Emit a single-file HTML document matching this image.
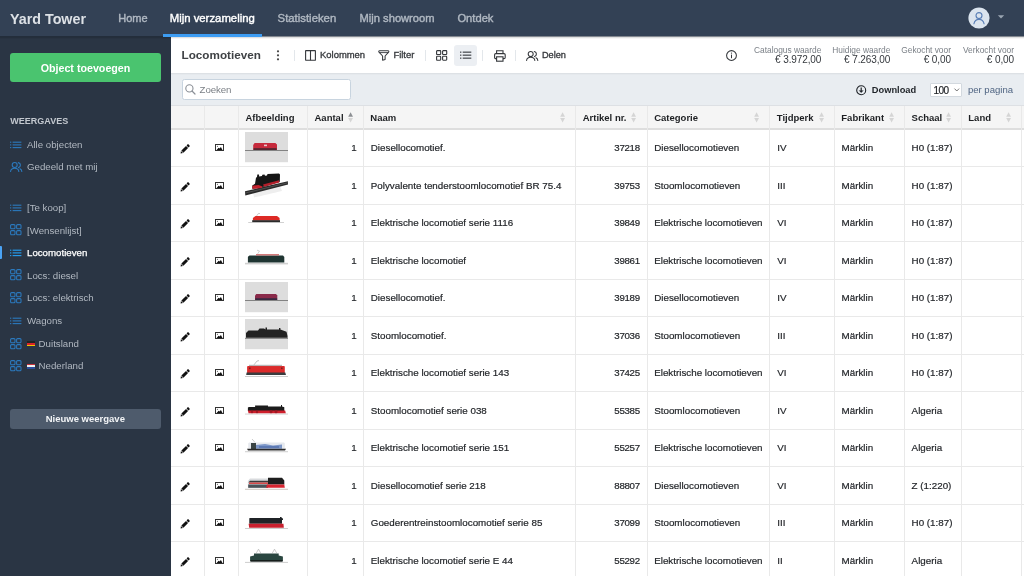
<!DOCTYPE html>
<html><head><meta charset="utf-8">
<style>
*{box-sizing:border-box;margin:0;padding:0}
html,body{width:1024px;height:576px;overflow:hidden;background:#fff;font-family:"Liberation Sans",sans-serif}
.a{position:absolute;overflow:visible}
.t{position:absolute;line-height:20px;white-space:nowrap}
#wrap{position:absolute;left:0;top:0;width:1024px;height:576px;will-change:transform}
</style></head><body><div id="wrap">
<div class="a" style="left:0.00px;top:0.00px;width:1024.00px;height:36.00px;background:#334155;z-index:3"></div>
<div class="a" style="left:0.00px;top:36.00px;width:1024.00px;height:1.00px;background:rgba(30,38,52,.55);z-index:3"></div>
<div class="a" style="left:0.00px;top:37.00px;width:1024.00px;height:1.00px;background:rgba(0,0,0,.12);z-index:3"></div>
<div class="a" style="left:0.00px;top:38.00px;width:1024.00px;height:1.00px;background:rgba(0,0,0,.04);z-index:3"></div>
<div class="t" style="left:10.00px;top:8.95px;font-size:14.3px;color:#dde1e6;font-weight:bold;z-index:4">Yard Tower</div>
<div class="t" style="left:118.20px;top:8.49px;font-size:11.0px;color:#b0b8c2;font-weight:normal;z-index:4;-webkit-text-stroke:0.4px #b0b8c2">Home</div>
<div class="t" style="left:169.70px;top:8.37px;font-size:11.35px;color:#ffffff;font-weight:normal;z-index:4;-webkit-text-stroke:0.4px #ffffff">Mijn verzameling</div>
<div class="t" style="left:277.60px;top:8.37px;font-size:11.35px;color:#b0b8c2;font-weight:normal;z-index:4;-webkit-text-stroke:0.4px #b0b8c2">Statistieken</div>
<div class="t" style="left:359.60px;top:8.44px;font-size:11.15px;color:#b0b8c2;font-weight:normal;z-index:4;-webkit-text-stroke:0.4px #b0b8c2">Mijn showroom</div>
<div class="t" style="left:457.40px;top:8.42px;font-size:11.2px;color:#b0b8c2;font-weight:normal;z-index:4;-webkit-text-stroke:0.4px #b0b8c2">Ontdek</div>
<div class="a" style="left:163.00px;top:34.00px;width:99.00px;height:3.00px;background:#3d9cf2;z-index:4"></div>
<svg class="a" style="left:967.60px;top:7.20px;z-index:4" width="22" height="22" viewBox="0 0 22 22"><circle cx="11" cy="11" r="10.6" fill="#dbe4ee"/><circle cx="11" cy="8.6" r="3" fill="none" stroke="#5a7fb6" stroke-width="1.1"/><path d="M5.9 16.8 C6.6 13.6 8.6 12.4 11 12.4 C13.4 12.4 15.4 13.6 16.1 16.8" fill="none" stroke="#5a7fb6" stroke-width="1.1" stroke-linecap="round"/></svg>
<svg class="a" style="left:996.60px;top:14.20px;z-index:4" width="8" height="6" viewBox="0 0 8 6"><path d="M0.8 1.2 L7.2 1.2 L4 4.6 Z" fill="#9aa5b2"/></svg>
<div class="a" style="left:0.00px;top:36.00px;width:171.00px;height:540.00px;background:#2a3544"></div>
<div class="a" style="left:10.00px;top:53.00px;width:150.70px;height:29.00px;background:#4ac46f;border-radius:3px"></div>
<div class="t" style="left:-64.50px;width:300px;text-align:center;top:57.89px;font-size:10.7px;color:#ffffff;font-weight:bold;">Object toevoegen</div>
<div class="t" style="left:10.30px;top:111.18px;font-size:9.0px;color:#c3c8cf;font-weight:bold;">WEERGAVES</div>
<svg class="a" style="left:10.30px;top:141.00px;" width="12" height="8" viewBox="0 0 12 8"><rect x="0" y="0.6499999999999999" width="1.3" height="1.1" fill="#2b79bd"/><rect x="2.6" y="0.6499999999999999" width="8.8" height="1.1" fill="#2b79bd"/><rect x="0" y="3.3499999999999996" width="1.3" height="1.1" fill="#2b79bd"/><rect x="2.6" y="3.3499999999999996" width="8.8" height="1.1" fill="#2b79bd"/><rect x="0" y="6.05" width="1.3" height="1.1" fill="#2b79bd"/><rect x="2.6" y="6.05" width="8.8" height="1.1" fill="#2b79bd"/></svg>
<div class="t" style="left:27.00px;top:134.74px;font-size:9.7px;color:#b1b8c1;font-weight:normal;">Alle objecten</div>
<svg class="a" style="left:10.10px;top:162.40px;" width="12.3" height="10" viewBox="0 0 12.3 10"><circle cx="4.7" cy="3.0" r="2.5" fill="none" stroke="#2b79bd" stroke-width="1.1"/><path d="M0.6 9.5 C0.8 7.3 2.6 6.3 4.7 6.3 C6.8 6.3 8.6 7.3 8.8 9.5" fill="none" stroke="#2b79bd" stroke-width="1.1" stroke-linecap="round"/><path d="M8.3 0.6 C9.6 0.9 10.4 1.9 10.4 3.1 C10.4 4.3 9.6 5.3 8.5 5.6" fill="none" stroke="#2b79bd" stroke-width="1.1" stroke-linecap="round"/><path d="M10 6.7 C11.2 7.3 11.8 8.3 11.8 9.5" fill="none" stroke="#2b79bd" stroke-width="1.1" stroke-linecap="round"/></svg>
<div class="t" style="left:27.00px;top:157.34px;font-size:9.7px;color:#b1b8c1;font-weight:normal;">Gedeeld met mij</div>
<svg class="a" style="left:10.30px;top:203.90px;" width="12" height="8" viewBox="0 0 12 8"><rect x="0" y="0.6499999999999999" width="1.3" height="1.1" fill="#2b79bd"/><rect x="2.6" y="0.6499999999999999" width="8.8" height="1.1" fill="#2b79bd"/><rect x="0" y="3.3499999999999996" width="1.3" height="1.1" fill="#2b79bd"/><rect x="2.6" y="3.3499999999999996" width="8.8" height="1.1" fill="#2b79bd"/><rect x="0" y="6.05" width="1.3" height="1.1" fill="#2b79bd"/><rect x="2.6" y="6.05" width="8.8" height="1.1" fill="#2b79bd"/></svg>
<div class="t" style="left:27.00px;top:197.64px;font-size:9.7px;color:#b1b8c1;font-weight:normal;">[Te koop]</div>
<svg class="a" style="left:10.20px;top:224.10px;" width="12" height="12" viewBox="0 0 12 12"><rect x="0.6" y="0.6" width="4.4" height="4.2" rx="1" fill="none" stroke="#2b79bd" stroke-width="1.05"/><rect x="0.6" y="6.6" width="4.4" height="4.2" rx="1" fill="none" stroke="#2b79bd" stroke-width="1.05"/><rect x="6.6" y="0.6" width="4.4" height="4.2" rx="1" fill="none" stroke="#2b79bd" stroke-width="1.05"/><rect x="6.6" y="6.6" width="4.4" height="4.2" rx="1" fill="none" stroke="#2b79bd" stroke-width="1.05"/></svg>
<div class="t" style="left:27.00px;top:220.64px;font-size:9.7px;color:#b1b8c1;font-weight:normal;">[Wensenlijst]</div>
<div class="a" style="left:0.00px;top:246.00px;width:2.00px;height:13.00px;background:#4aa3f5;border-radius:0 1px 1px 0"></div>
<svg class="a" style="left:10.30px;top:248.90px;" width="12" height="8" viewBox="0 0 12 8"><rect x="0" y="0.6499999999999999" width="1.3" height="1.1" fill="#24a0f4"/><rect x="2.6" y="0.6499999999999999" width="8.8" height="1.1" fill="#24a0f4"/><rect x="0" y="3.3499999999999996" width="1.3" height="1.1" fill="#24a0f4"/><rect x="2.6" y="3.3499999999999996" width="8.8" height="1.1" fill="#24a0f4"/><rect x="0" y="6.05" width="1.3" height="1.1" fill="#24a0f4"/><rect x="2.6" y="6.05" width="8.8" height="1.1" fill="#24a0f4"/></svg>
<div class="t" style="left:27.00px;top:242.64px;font-size:9.7px;color:#ffffff;font-weight:normal;-webkit-text-stroke:0.25px #fff">Locomotieven</div>
<svg class="a" style="left:10.20px;top:269.10px;" width="12" height="12" viewBox="0 0 12 12"><rect x="0.6" y="0.6" width="4.4" height="4.2" rx="1" fill="none" stroke="#2b79bd" stroke-width="1.05"/><rect x="0.6" y="6.6" width="4.4" height="4.2" rx="1" fill="none" stroke="#2b79bd" stroke-width="1.05"/><rect x="6.6" y="0.6" width="4.4" height="4.2" rx="1" fill="none" stroke="#2b79bd" stroke-width="1.05"/><rect x="6.6" y="6.6" width="4.4" height="4.2" rx="1" fill="none" stroke="#2b79bd" stroke-width="1.05"/></svg>
<div class="t" style="left:27.00px;top:265.64px;font-size:9.7px;color:#b1b8c1;font-weight:normal;">Locs: diesel</div>
<svg class="a" style="left:10.20px;top:291.80px;" width="12" height="12" viewBox="0 0 12 12"><rect x="0.6" y="0.6" width="4.4" height="4.2" rx="1" fill="none" stroke="#2b79bd" stroke-width="1.05"/><rect x="0.6" y="6.6" width="4.4" height="4.2" rx="1" fill="none" stroke="#2b79bd" stroke-width="1.05"/><rect x="6.6" y="0.6" width="4.4" height="4.2" rx="1" fill="none" stroke="#2b79bd" stroke-width="1.05"/><rect x="6.6" y="6.6" width="4.4" height="4.2" rx="1" fill="none" stroke="#2b79bd" stroke-width="1.05"/></svg>
<div class="t" style="left:27.00px;top:288.34px;font-size:9.7px;color:#b1b8c1;font-weight:normal;">Locs: elektrisch</div>
<svg class="a" style="left:10.30px;top:317.10px;" width="12" height="8" viewBox="0 0 12 8"><rect x="0" y="0.6499999999999999" width="1.3" height="1.1" fill="#2b79bd"/><rect x="2.6" y="0.6499999999999999" width="8.8" height="1.1" fill="#2b79bd"/><rect x="0" y="3.3499999999999996" width="1.3" height="1.1" fill="#2b79bd"/><rect x="2.6" y="3.3499999999999996" width="8.8" height="1.1" fill="#2b79bd"/><rect x="0" y="6.05" width="1.3" height="1.1" fill="#2b79bd"/><rect x="2.6" y="6.05" width="8.8" height="1.1" fill="#2b79bd"/></svg>
<div class="t" style="left:27.00px;top:310.84px;font-size:9.7px;color:#b1b8c1;font-weight:normal;">Wagons</div>
<svg class="a" style="left:10.20px;top:337.50px;" width="12" height="12" viewBox="0 0 12 12"><rect x="0.6" y="0.6" width="4.4" height="4.2" rx="1" fill="none" stroke="#2b79bd" stroke-width="1.05"/><rect x="0.6" y="6.6" width="4.4" height="4.2" rx="1" fill="none" stroke="#2b79bd" stroke-width="1.05"/><rect x="6.6" y="0.6" width="4.4" height="4.2" rx="1" fill="none" stroke="#2b79bd" stroke-width="1.05"/><rect x="6.6" y="6.6" width="4.4" height="4.2" rx="1" fill="none" stroke="#2b79bd" stroke-width="1.05"/></svg>
<div class="a" style="left:27.00px;top:341.30px;width:8.40px;height:1.70px;background:#222"></div>
<div class="a" style="left:27.00px;top:343.00px;width:8.40px;height:1.70px;background:#d8232a"></div>
<div class="a" style="left:27.00px;top:344.70px;width:8.40px;height:1.70px;background:#f2c200"></div>
<div class="t" style="left:38.60px;top:334.04px;font-size:9.7px;color:#b1b8c1;font-weight:normal;">Duitsland</div>
<svg class="a" style="left:10.20px;top:359.70px;" width="12" height="12" viewBox="0 0 12 12"><rect x="0.6" y="0.6" width="4.4" height="4.2" rx="1" fill="none" stroke="#2b79bd" stroke-width="1.05"/><rect x="0.6" y="6.6" width="4.4" height="4.2" rx="1" fill="none" stroke="#2b79bd" stroke-width="1.05"/><rect x="6.6" y="0.6" width="4.4" height="4.2" rx="1" fill="none" stroke="#2b79bd" stroke-width="1.05"/><rect x="6.6" y="6.6" width="4.4" height="4.2" rx="1" fill="none" stroke="#2b79bd" stroke-width="1.05"/></svg>
<div class="a" style="left:27.00px;top:363.50px;width:8.40px;height:1.70px;background:#c8303a"></div>
<div class="a" style="left:27.00px;top:365.20px;width:8.40px;height:1.70px;background:#eeeeee"></div>
<div class="a" style="left:27.00px;top:366.90px;width:8.40px;height:1.70px;background:#2a4d9a"></div>
<div class="t" style="left:38.60px;top:356.24px;font-size:9.7px;color:#b1b8c1;font-weight:normal;">Nederland</div>
<div class="a" style="left:10.00px;top:409.00px;width:150.70px;height:20.00px;background:#4e5b6c;border-radius:3px"></div>
<div class="t" style="left:-64.70px;width:300px;text-align:center;top:409.41px;font-size:9.5px;color:#f2f4f6;font-weight:bold;">Nieuwe weergave</div>
<div class="a" style="left:171.00px;top:36.00px;width:853.00px;height:37.00px;background:#ffffff"></div>
<div class="t" style="left:181.60px;top:45.45px;font-size:11.7px;color:#3f4245;font-weight:bold;">Locomotieven</div>
<svg class="a" style="left:276.00px;top:50.00px;" width="4" height="11" viewBox="0 0 4 11"><circle cx="2" cy="1.3" r="1.1" fill="#444"/><circle cx="2" cy="5.3" r="1.1" fill="#444"/><circle cx="2" cy="9.3" r="1.1" fill="#444"/></svg>
<div class="a" style="left:293.50px;top:49.50px;width:1.00px;height:11.50px;background:#e3e7eb"></div>
<div class="a" style="left:424.90px;top:49.50px;width:1.00px;height:11.50px;background:#e3e7eb"></div>
<div class="a" style="left:482.00px;top:49.50px;width:1.00px;height:11.50px;background:#e3e7eb"></div>
<div class="a" style="left:515.30px;top:49.50px;width:1.00px;height:11.50px;background:#e3e7eb"></div>
<svg class="a" style="left:305.00px;top:50.00px;" width="11" height="11" viewBox="0 0 11 11"><rect x="0.6" y="0.6" width="9.8" height="9.6" rx="0.3" fill="none" stroke="#34373b" stroke-width="1.1"/><line x1="5.5" y1="0.6" x2="5.5" y2="10.2" stroke="#34373b" stroke-width="1.1"/></svg>
<div class="t" style="left:320.00px;top:45.13px;font-size:9.45px;color:#34373b;font-weight:normal;-webkit-text-stroke:0.3px #34373b">Kolommen</div>
<svg class="a" style="left:378.00px;top:49.80px;" width="12" height="11" viewBox="0 0 12 11"><path d="M1.6 0.7 H10 C10.8 0.7 11.1 1.6 10.6 2.2 L7.1 6 V9.6 L4.6 10.2 V6 L1 2.2 C0.5 1.6 0.8 0.7 1.6 0.7 Z" fill="none" stroke="#34373b" stroke-width="1.05" stroke-linejoin="round"/><line x1="1.4" y1="2.6" x2="10.2" y2="2.6" stroke="#34373b" stroke-width="0.9"/></svg>
<div class="t" style="left:393.40px;top:45.13px;font-size:9.45px;color:#34373b;font-weight:normal;-webkit-text-stroke:0.3px #34373b">Filter</div>
<svg class="a" style="left:436.40px;top:50.00px;" width="12" height="11" viewBox="0 0 12 11"><rect x="0.6" y="0.6" width="4.1" height="3.9" rx="0.6" fill="none" stroke="#34373b" stroke-width="1.1"/><rect x="0.6" y="6.3" width="4.1" height="3.9" rx="0.6" fill="none" stroke="#34373b" stroke-width="1.1"/><rect x="6.6" y="0.6" width="4.1" height="3.9" rx="0.6" fill="none" stroke="#34373b" stroke-width="1.1"/><rect x="6.6" y="6.3" width="4.1" height="3.9" rx="0.6" fill="none" stroke="#34373b" stroke-width="1.1"/></svg>
<div class="a" style="left:454.40px;top:44.70px;width:23.10px;height:21.10px;background:#eceff3;border-radius:3px"></div>
<svg class="a" style="left:460.00px;top:51.00px;" width="12" height="9" viewBox="0 0 12 9"><rect x="0" y="0.6" width="1.4" height="1.1" fill="#34373b"/><rect x="2.7" y="0.6" width="8.6" height="1.1" fill="#34373b"/><rect x="0" y="3.6" width="1.4" height="1.1" fill="#34373b"/><rect x="2.7" y="3.6" width="8.6" height="1.1" fill="#34373b"/><rect x="0" y="6.6" width="1.4" height="1.1" fill="#34373b"/><rect x="2.7" y="6.6" width="8.6" height="1.1" fill="#34373b"/></svg>
<svg class="a" style="left:493.80px;top:49.60px;" width="12" height="12" viewBox="0 0 12 12"><path d="M2.6 3.6 V0.8 H9 V3.6" fill="none" stroke="#34373b" stroke-width="1.1"/><rect x="0.6" y="3.6" width="10.6" height="5" rx="1.2" fill="none" stroke="#34373b" stroke-width="1.1"/><rect x="2.6" y="6.8" width="6.4" height="4.4" fill="#fff" stroke="#34373b" stroke-width="1.1"/></svg>
<svg class="a" style="left:526.00px;top:50.60px;" width="12.3" height="10" viewBox="0 0 12.3 10"><circle cx="4.7" cy="3.0" r="2.5" fill="none" stroke="#34373b" stroke-width="1.05"/><path d="M0.6 9.5 C0.8 7.3 2.6 6.3 4.7 6.3 C6.8 6.3 8.6 7.3 8.8 9.5" fill="none" stroke="#34373b" stroke-width="1.05" stroke-linecap="round"/><path d="M8.3 0.6 C9.6 0.9 10.4 1.9 10.4 3.1 C10.4 4.3 9.6 5.3 8.5 5.6" fill="none" stroke="#34373b" stroke-width="1.05" stroke-linecap="round"/><path d="M10 6.7 C11.2 7.3 11.8 8.3 11.8 9.5" fill="none" stroke="#34373b" stroke-width="1.05" stroke-linecap="round"/></svg>
<div class="t" style="left:541.90px;top:45.21px;font-size:9.2px;color:#34373b;font-weight:normal;-webkit-text-stroke:0.3px #34373b">Delen</div>
<svg class="a" style="left:726.00px;top:49.60px;" width="11" height="11" viewBox="0 0 11 11"><circle cx="5.5" cy="5.5" r="4.9" fill="none" stroke="#34373b" stroke-width="1.05"/><rect x="5" y="4.6" width="1" height="3.6" fill="#34373b"/><circle cx="5.5" cy="3.1" r="0.65" fill="#34373b"/></svg>
<div class="t" style="right:202.70px;top:39.81px;font-size:8.35px;color:#7b8087;font-weight:normal;">Catalogus waarde</div>
<div class="t" style="right:202.70px;top:49.94px;font-size:10.0px;color:#34383d;font-weight:normal;letter-spacing:-0.1px">€ 3.972,00</div>
<div class="t" style="right:133.70px;top:39.81px;font-size:8.35px;color:#7b8087;font-weight:normal;">Huidige waarde</div>
<div class="t" style="right:133.70px;top:49.94px;font-size:10.0px;color:#34383d;font-weight:normal;letter-spacing:-0.1px">€ 7.263,00</div>
<div class="t" style="right:73.10px;top:39.81px;font-size:8.35px;color:#7b8087;font-weight:normal;">Gekocht voor</div>
<div class="t" style="right:73.10px;top:49.94px;font-size:10.0px;color:#34383d;font-weight:normal;letter-spacing:-0.1px">€ 0,00</div>
<div class="t" style="right:10.00px;top:39.81px;font-size:8.35px;color:#7b8087;font-weight:normal;">Verkocht voor</div>
<div class="t" style="right:10.00px;top:49.94px;font-size:10.0px;color:#34383d;font-weight:normal;letter-spacing:-0.1px">€ 0,00</div>
<div class="a" style="left:171.00px;top:73.00px;width:853.00px;height:32.50px;background:#e9edf1"></div>
<div class="a" style="left:171.00px;top:73.00px;width:853.00px;height:2.00px;background:linear-gradient(#d9dde1,#e9edf1)"></div>
<div class="a" style="left:182.00px;top:79.20px;width:168.60px;height:20.80px;background:#fff;border:1px solid #c8d4df;border-radius:2.5px"></div>
<svg class="a" style="left:185.30px;top:83.80px;" width="11" height="11" viewBox="0 0 11 11"><circle cx="4.4" cy="4.4" r="3.6" fill="none" stroke="#8a8f96" stroke-width="1.1"/><line x1="7" y1="7" x2="10" y2="10" stroke="#8a8f96" stroke-width="1.2" stroke-linecap="round"/></svg>
<div class="t" style="left:199.60px;top:79.84px;font-size:9.7px;color:#7a7f85;font-weight:normal;letter-spacing:-0.1px">Zoeken</div>
<svg class="a" style="left:855.80px;top:84.70px;" width="11" height="11" viewBox="0 0 11 11"><circle cx="5.2" cy="5.2" r="4.5" fill="none" stroke="#1f2328" stroke-width="1.1"/><line x1="5.2" y1="2.6" x2="5.2" y2="7" stroke="#1f2328" stroke-width="1.2"/><path d="M3.2 5.4 L5.2 7.6 L7.2 5.4" fill="#1f2328" stroke="#1f2328" stroke-width="0.6"/></svg>
<div class="t" style="left:871.80px;top:79.78px;font-size:9.3px;color:#1f2328;font-weight:bold;">Download</div>
<div class="a" style="left:930.10px;top:83.20px;width:31.50px;height:14.00px;background:#fff;border:1px solid #d3d9df;border-radius:1px"></div>
<div class="t" style="left:933.40px;top:80.83px;font-size:10.0px;color:#222529;font-weight:normal;letter-spacing:-0.5px;-webkit-text-stroke:0.2px #222529">100</div>
<svg class="a" style="left:953.60px;top:88.00px;" width="6" height="4" viewBox="0 0 6 4"><path d="M0.5 0.6 L2.8 3 L5.1 0.6" fill="none" stroke="#555" stroke-width="0.8"/></svg>
<div class="t" style="left:967.90px;top:80.19px;font-size:9.55px;color:#4f6482;font-weight:normal;">per pagina</div>
<div class="a" style="left:171.00px;top:105.50px;width:853.00px;height:23.70px;background:#f5f5f5"></div>
<div class="a" style="left:171.00px;top:128.00px;width:853.00px;height:1.70px;background:#dedede"></div>
<div class="a" style="left:171.00px;top:105.00px;width:853.00px;height:1.00px;background:#dde0e4"></div>
<div class="a" style="left:203.90px;top:105.50px;width:1.00px;height:470.50px;background:#e9e9e9"></div>
<div class="a" style="left:237.90px;top:105.50px;width:1.00px;height:470.50px;background:#e9e9e9"></div>
<div class="a" style="left:307.00px;top:105.50px;width:1.00px;height:470.50px;background:#e9e9e9"></div>
<div class="a" style="left:362.80px;top:105.50px;width:1.00px;height:470.50px;background:#e9e9e9"></div>
<div class="a" style="left:575.20px;top:105.50px;width:1.00px;height:470.50px;background:#e9e9e9"></div>
<div class="a" style="left:646.70px;top:105.50px;width:1.00px;height:470.50px;background:#e9e9e9"></div>
<div class="a" style="left:769.30px;top:105.50px;width:1.00px;height:470.50px;background:#e9e9e9"></div>
<div class="a" style="left:833.80px;top:105.50px;width:1.00px;height:470.50px;background:#e9e9e9"></div>
<div class="a" style="left:904.10px;top:105.50px;width:1.00px;height:470.50px;background:#e9e9e9"></div>
<div class="a" style="left:960.80px;top:105.50px;width:1.00px;height:470.50px;background:#e9e9e9"></div>
<div class="a" style="left:1020.80px;top:105.50px;width:1.00px;height:470.50px;background:#e9e9e9"></div>
<div class="a" style="left:171.00px;top:166.20px;width:853.00px;height:1.00px;background:#e9e9e9"></div>
<div class="a" style="left:171.00px;top:203.70px;width:853.00px;height:1.00px;background:#e9e9e9"></div>
<div class="a" style="left:171.00px;top:241.20px;width:853.00px;height:1.00px;background:#e9e9e9"></div>
<div class="a" style="left:171.00px;top:278.70px;width:853.00px;height:1.00px;background:#e9e9e9"></div>
<div class="a" style="left:171.00px;top:316.20px;width:853.00px;height:1.00px;background:#e9e9e9"></div>
<div class="a" style="left:171.00px;top:353.70px;width:853.00px;height:1.00px;background:#e9e9e9"></div>
<div class="a" style="left:171.00px;top:391.20px;width:853.00px;height:1.00px;background:#e9e9e9"></div>
<div class="a" style="left:171.00px;top:428.70px;width:853.00px;height:1.00px;background:#e9e9e9"></div>
<div class="a" style="left:171.00px;top:466.20px;width:853.00px;height:1.00px;background:#e9e9e9"></div>
<div class="a" style="left:171.00px;top:503.70px;width:853.00px;height:1.00px;background:#e9e9e9"></div>
<div class="a" style="left:171.00px;top:541.20px;width:853.00px;height:1.00px;background:#e9e9e9"></div>
<div class="a" style="left:171.00px;top:578.70px;width:853.00px;height:1.00px;background:#e9e9e9"></div>
<div class="t" style="left:245.40px;top:107.91px;font-size:9.5px;color:#1d1f22;font-weight:bold;">Afbeelding</div>
<div class="t" style="left:314.50px;top:107.91px;font-size:9.5px;color:#1d1f22;font-weight:bold;">Aantal</div>
<svg class="a" style="left:347.50px;top:111.70px;" width="5.2" height="11" viewBox="0 0 5.2 11"><path d="M0.2 4.8 L2.6 0.3 L5 4.8 Z" fill="#8c8f93"/><path d="M0.2 6.1 L2.6 10.6 L5 6.1 Z" fill="#d5d5d5"/></svg>
<div class="t" style="left:370.30px;top:107.91px;font-size:9.5px;color:#1d1f22;font-weight:bold;">Naam</div>
<svg class="a" style="left:559.90px;top:111.70px;" width="5.2" height="11" viewBox="0 0 5.2 11"><path d="M0.2 4.8 L2.6 0.3 L5 4.8 Z" fill="#d5d5d5"/><path d="M0.2 6.1 L2.6 10.6 L5 6.1 Z" fill="#d5d5d5"/></svg>
<div class="t" style="left:582.70px;top:107.91px;font-size:9.5px;color:#1d1f22;font-weight:bold;">Artikel nr.</div>
<svg class="a" style="left:631.40px;top:111.70px;" width="5.2" height="11" viewBox="0 0 5.2 11"><path d="M0.2 4.8 L2.6 0.3 L5 4.8 Z" fill="#d5d5d5"/><path d="M0.2 6.1 L2.6 10.6 L5 6.1 Z" fill="#d5d5d5"/></svg>
<div class="t" style="left:654.20px;top:107.91px;font-size:9.5px;color:#1d1f22;font-weight:bold;">Categorie</div>
<svg class="a" style="left:754.00px;top:111.70px;" width="5.2" height="11" viewBox="0 0 5.2 11"><path d="M0.2 4.8 L2.6 0.3 L5 4.8 Z" fill="#d5d5d5"/><path d="M0.2 6.1 L2.6 10.6 L5 6.1 Z" fill="#d5d5d5"/></svg>
<div class="t" style="left:776.80px;top:107.91px;font-size:9.5px;color:#1d1f22;font-weight:bold;">Tijdperk</div>
<svg class="a" style="left:818.50px;top:111.70px;" width="5.2" height="11" viewBox="0 0 5.2 11"><path d="M0.2 4.8 L2.6 0.3 L5 4.8 Z" fill="#d5d5d5"/><path d="M0.2 6.1 L2.6 10.6 L5 6.1 Z" fill="#d5d5d5"/></svg>
<div class="t" style="left:841.30px;top:107.91px;font-size:9.5px;color:#1d1f22;font-weight:bold;">Fabrikant</div>
<svg class="a" style="left:888.80px;top:111.70px;" width="5.2" height="11" viewBox="0 0 5.2 11"><path d="M0.2 4.8 L2.6 0.3 L5 4.8 Z" fill="#d5d5d5"/><path d="M0.2 6.1 L2.6 10.6 L5 6.1 Z" fill="#d5d5d5"/></svg>
<div class="t" style="left:911.60px;top:107.91px;font-size:9.5px;color:#1d1f22;font-weight:bold;">Schaal</div>
<svg class="a" style="left:945.50px;top:111.70px;" width="5.2" height="11" viewBox="0 0 5.2 11"><path d="M0.2 4.8 L2.6 0.3 L5 4.8 Z" fill="#d5d5d5"/><path d="M0.2 6.1 L2.6 10.6 L5 6.1 Z" fill="#d5d5d5"/></svg>
<div class="t" style="left:968.30px;top:107.91px;font-size:9.5px;color:#1d1f22;font-weight:bold;">Land</div>
<svg class="a" style="left:1005.50px;top:111.70px;" width="5.2" height="11" viewBox="0 0 5.2 11"><path d="M0.2 4.8 L2.6 0.3 L5 4.8 Z" fill="#d5d5d5"/><path d="M0.2 6.1 L2.6 10.6 L5 6.1 Z" fill="#d5d5d5"/></svg>
<svg class="a" style="left:180.30px;top:144.45px;" width="10" height="10" viewBox="0 0 10 10"><g transform="translate(5,5) rotate(-45)"><path d="M-6.2 0 L-4.3 -1.45 V1.45 Z" fill="#111"/><rect x="-3.7" y="-1.45" width="6.6" height="2.9" fill="#111"/><rect x="3.5" y="-1.45" width="2.2" height="2.9" rx="0.5" fill="#111"/></g></svg>
<svg class="a" style="left:214.90px;top:144.05px;" width="9" height="7" viewBox="0 0 9 7"><rect x="0.5" y="0.5" width="8" height="6" fill="none" stroke="#333" stroke-width="1.0"/><path d="M1.6 5.9 L3.6 3.7 L4.6 4.4 L5.9 2.9 L7.5 5.9 Z" fill="#111"/><circle cx="2.4" cy="2.3" r="0.55" fill="#333"/></svg>
<div class="t" style="right:667.20px;top:138.05px;font-size:9.8px;color:#1f2226;font-weight:normal;-webkit-text-stroke:0.2px #1f2226">1</div>
<div class="t" style="left:370.80px;top:138.05px;font-size:9.8px;color:#1f2226;font-weight:normal;-webkit-text-stroke:0.2px #1f2226">Diesellocomotief.</div>
<div class="t" style="right:384.20px;top:138.09px;font-size:9.7px;color:#1f2226;font-weight:normal;-webkit-text-stroke:0.2px #1f2226;letter-spacing:-0.3px">37218</div>
<div class="t" style="left:654.20px;top:138.05px;font-size:9.8px;color:#1f2226;font-weight:normal;-webkit-text-stroke:0.2px #1f2226">Diesellocomotieven</div>
<div class="t" style="left:777.30px;top:138.05px;font-size:9.8px;color:#1f2226;font-weight:normal;-webkit-text-stroke:0.2px #1f2226">IV</div>
<div class="t" style="left:841.60px;top:138.05px;font-size:9.8px;color:#1f2226;font-weight:normal;-webkit-text-stroke:0.2px #1f2226">Märklin</div>
<div class="t" style="left:911.60px;top:138.05px;font-size:9.8px;color:#1f2226;font-weight:normal;-webkit-text-stroke:0.2px #1f2226">H0 (1:87)</div>
<svg class="a" style="left:180.30px;top:181.95px;" width="10" height="10" viewBox="0 0 10 10"><g transform="translate(5,5) rotate(-45)"><path d="M-6.2 0 L-4.3 -1.45 V1.45 Z" fill="#111"/><rect x="-3.7" y="-1.45" width="6.6" height="2.9" fill="#111"/><rect x="3.5" y="-1.45" width="2.2" height="2.9" rx="0.5" fill="#111"/></g></svg>
<svg class="a" style="left:214.90px;top:181.55px;" width="9" height="7" viewBox="0 0 9 7"><rect x="0.5" y="0.5" width="8" height="6" fill="none" stroke="#333" stroke-width="1.0"/><path d="M1.6 5.9 L3.6 3.7 L4.6 4.4 L5.9 2.9 L7.5 5.9 Z" fill="#111"/><circle cx="2.4" cy="2.3" r="0.55" fill="#333"/></svg>
<div class="t" style="right:667.20px;top:175.55px;font-size:9.8px;color:#1f2226;font-weight:normal;-webkit-text-stroke:0.2px #1f2226">1</div>
<div class="t" style="left:370.80px;top:175.55px;font-size:9.8px;color:#1f2226;font-weight:normal;-webkit-text-stroke:0.2px #1f2226">Polyvalente tenderstoomlocomotief BR 75.4</div>
<div class="t" style="right:384.20px;top:175.59px;font-size:9.7px;color:#1f2226;font-weight:normal;-webkit-text-stroke:0.2px #1f2226;letter-spacing:-0.3px">39753</div>
<div class="t" style="left:654.20px;top:175.55px;font-size:9.8px;color:#1f2226;font-weight:normal;-webkit-text-stroke:0.2px #1f2226">Stoomlocomotieven</div>
<div class="t" style="left:777.30px;top:175.55px;font-size:9.8px;color:#1f2226;font-weight:normal;-webkit-text-stroke:0.2px #1f2226">III</div>
<div class="t" style="left:841.60px;top:175.55px;font-size:9.8px;color:#1f2226;font-weight:normal;-webkit-text-stroke:0.2px #1f2226">Märklin</div>
<div class="t" style="left:911.60px;top:175.55px;font-size:9.8px;color:#1f2226;font-weight:normal;-webkit-text-stroke:0.2px #1f2226">H0 (1:87)</div>
<svg class="a" style="left:180.30px;top:219.45px;" width="10" height="10" viewBox="0 0 10 10"><g transform="translate(5,5) rotate(-45)"><path d="M-6.2 0 L-4.3 -1.45 V1.45 Z" fill="#111"/><rect x="-3.7" y="-1.45" width="6.6" height="2.9" fill="#111"/><rect x="3.5" y="-1.45" width="2.2" height="2.9" rx="0.5" fill="#111"/></g></svg>
<svg class="a" style="left:214.90px;top:219.05px;" width="9" height="7" viewBox="0 0 9 7"><rect x="0.5" y="0.5" width="8" height="6" fill="none" stroke="#333" stroke-width="1.0"/><path d="M1.6 5.9 L3.6 3.7 L4.6 4.4 L5.9 2.9 L7.5 5.9 Z" fill="#111"/><circle cx="2.4" cy="2.3" r="0.55" fill="#333"/></svg>
<div class="t" style="right:667.20px;top:213.05px;font-size:9.8px;color:#1f2226;font-weight:normal;-webkit-text-stroke:0.2px #1f2226">1</div>
<div class="t" style="left:370.80px;top:213.05px;font-size:9.8px;color:#1f2226;font-weight:normal;-webkit-text-stroke:0.2px #1f2226">Elektrische locomotief serie 1116</div>
<div class="t" style="right:384.20px;top:213.09px;font-size:9.7px;color:#1f2226;font-weight:normal;-webkit-text-stroke:0.2px #1f2226;letter-spacing:-0.3px">39849</div>
<div class="t" style="left:654.20px;top:213.05px;font-size:9.8px;color:#1f2226;font-weight:normal;-webkit-text-stroke:0.2px #1f2226">Elektrische locomotieven</div>
<div class="t" style="left:777.30px;top:213.05px;font-size:9.8px;color:#1f2226;font-weight:normal;-webkit-text-stroke:0.2px #1f2226">VI</div>
<div class="t" style="left:841.60px;top:213.05px;font-size:9.8px;color:#1f2226;font-weight:normal;-webkit-text-stroke:0.2px #1f2226">Märklin</div>
<div class="t" style="left:911.60px;top:213.05px;font-size:9.8px;color:#1f2226;font-weight:normal;-webkit-text-stroke:0.2px #1f2226">H0 (1:87)</div>
<svg class="a" style="left:180.30px;top:256.95px;" width="10" height="10" viewBox="0 0 10 10"><g transform="translate(5,5) rotate(-45)"><path d="M-6.2 0 L-4.3 -1.45 V1.45 Z" fill="#111"/><rect x="-3.7" y="-1.45" width="6.6" height="2.9" fill="#111"/><rect x="3.5" y="-1.45" width="2.2" height="2.9" rx="0.5" fill="#111"/></g></svg>
<svg class="a" style="left:214.90px;top:256.55px;" width="9" height="7" viewBox="0 0 9 7"><rect x="0.5" y="0.5" width="8" height="6" fill="none" stroke="#333" stroke-width="1.0"/><path d="M1.6 5.9 L3.6 3.7 L4.6 4.4 L5.9 2.9 L7.5 5.9 Z" fill="#111"/><circle cx="2.4" cy="2.3" r="0.55" fill="#333"/></svg>
<div class="t" style="right:667.20px;top:250.55px;font-size:9.8px;color:#1f2226;font-weight:normal;-webkit-text-stroke:0.2px #1f2226">1</div>
<div class="t" style="left:370.80px;top:250.55px;font-size:9.8px;color:#1f2226;font-weight:normal;-webkit-text-stroke:0.2px #1f2226">Elektrische locomotief</div>
<div class="t" style="right:384.20px;top:250.59px;font-size:9.7px;color:#1f2226;font-weight:normal;-webkit-text-stroke:0.2px #1f2226;letter-spacing:-0.3px">39861</div>
<div class="t" style="left:654.20px;top:250.55px;font-size:9.8px;color:#1f2226;font-weight:normal;-webkit-text-stroke:0.2px #1f2226">Elektrische locomotieven</div>
<div class="t" style="left:777.30px;top:250.55px;font-size:9.8px;color:#1f2226;font-weight:normal;-webkit-text-stroke:0.2px #1f2226">VI</div>
<div class="t" style="left:841.60px;top:250.55px;font-size:9.8px;color:#1f2226;font-weight:normal;-webkit-text-stroke:0.2px #1f2226">Märklin</div>
<div class="t" style="left:911.60px;top:250.55px;font-size:9.8px;color:#1f2226;font-weight:normal;-webkit-text-stroke:0.2px #1f2226">H0 (1:87)</div>
<svg class="a" style="left:180.30px;top:294.45px;" width="10" height="10" viewBox="0 0 10 10"><g transform="translate(5,5) rotate(-45)"><path d="M-6.2 0 L-4.3 -1.45 V1.45 Z" fill="#111"/><rect x="-3.7" y="-1.45" width="6.6" height="2.9" fill="#111"/><rect x="3.5" y="-1.45" width="2.2" height="2.9" rx="0.5" fill="#111"/></g></svg>
<svg class="a" style="left:214.90px;top:294.05px;" width="9" height="7" viewBox="0 0 9 7"><rect x="0.5" y="0.5" width="8" height="6" fill="none" stroke="#333" stroke-width="1.0"/><path d="M1.6 5.9 L3.6 3.7 L4.6 4.4 L5.9 2.9 L7.5 5.9 Z" fill="#111"/><circle cx="2.4" cy="2.3" r="0.55" fill="#333"/></svg>
<div class="t" style="right:667.20px;top:288.05px;font-size:9.8px;color:#1f2226;font-weight:normal;-webkit-text-stroke:0.2px #1f2226">1</div>
<div class="t" style="left:370.80px;top:288.05px;font-size:9.8px;color:#1f2226;font-weight:normal;-webkit-text-stroke:0.2px #1f2226">Diesellocomotief.</div>
<div class="t" style="right:384.20px;top:288.09px;font-size:9.7px;color:#1f2226;font-weight:normal;-webkit-text-stroke:0.2px #1f2226;letter-spacing:-0.3px">39189</div>
<div class="t" style="left:654.20px;top:288.05px;font-size:9.8px;color:#1f2226;font-weight:normal;-webkit-text-stroke:0.2px #1f2226">Diesellocomotieven</div>
<div class="t" style="left:777.30px;top:288.05px;font-size:9.8px;color:#1f2226;font-weight:normal;-webkit-text-stroke:0.2px #1f2226">IV</div>
<div class="t" style="left:841.60px;top:288.05px;font-size:9.8px;color:#1f2226;font-weight:normal;-webkit-text-stroke:0.2px #1f2226">Märklin</div>
<div class="t" style="left:911.60px;top:288.05px;font-size:9.8px;color:#1f2226;font-weight:normal;-webkit-text-stroke:0.2px #1f2226">H0 (1:87)</div>
<svg class="a" style="left:180.30px;top:331.95px;" width="10" height="10" viewBox="0 0 10 10"><g transform="translate(5,5) rotate(-45)"><path d="M-6.2 0 L-4.3 -1.45 V1.45 Z" fill="#111"/><rect x="-3.7" y="-1.45" width="6.6" height="2.9" fill="#111"/><rect x="3.5" y="-1.45" width="2.2" height="2.9" rx="0.5" fill="#111"/></g></svg>
<svg class="a" style="left:214.90px;top:331.55px;" width="9" height="7" viewBox="0 0 9 7"><rect x="0.5" y="0.5" width="8" height="6" fill="none" stroke="#333" stroke-width="1.0"/><path d="M1.6 5.9 L3.6 3.7 L4.6 4.4 L5.9 2.9 L7.5 5.9 Z" fill="#111"/><circle cx="2.4" cy="2.3" r="0.55" fill="#333"/></svg>
<div class="t" style="right:667.20px;top:325.55px;font-size:9.8px;color:#1f2226;font-weight:normal;-webkit-text-stroke:0.2px #1f2226">1</div>
<div class="t" style="left:370.80px;top:325.55px;font-size:9.8px;color:#1f2226;font-weight:normal;-webkit-text-stroke:0.2px #1f2226">Stoomlocomotief.</div>
<div class="t" style="right:384.20px;top:325.59px;font-size:9.7px;color:#1f2226;font-weight:normal;-webkit-text-stroke:0.2px #1f2226;letter-spacing:-0.3px">37036</div>
<div class="t" style="left:654.20px;top:325.55px;font-size:9.8px;color:#1f2226;font-weight:normal;-webkit-text-stroke:0.2px #1f2226">Stoomlocomotieven</div>
<div class="t" style="left:777.30px;top:325.55px;font-size:9.8px;color:#1f2226;font-weight:normal;-webkit-text-stroke:0.2px #1f2226">III</div>
<div class="t" style="left:841.60px;top:325.55px;font-size:9.8px;color:#1f2226;font-weight:normal;-webkit-text-stroke:0.2px #1f2226">Märklin</div>
<div class="t" style="left:911.60px;top:325.55px;font-size:9.8px;color:#1f2226;font-weight:normal;-webkit-text-stroke:0.2px #1f2226">H0 (1:87)</div>
<svg class="a" style="left:180.30px;top:369.45px;" width="10" height="10" viewBox="0 0 10 10"><g transform="translate(5,5) rotate(-45)"><path d="M-6.2 0 L-4.3 -1.45 V1.45 Z" fill="#111"/><rect x="-3.7" y="-1.45" width="6.6" height="2.9" fill="#111"/><rect x="3.5" y="-1.45" width="2.2" height="2.9" rx="0.5" fill="#111"/></g></svg>
<svg class="a" style="left:214.90px;top:369.05px;" width="9" height="7" viewBox="0 0 9 7"><rect x="0.5" y="0.5" width="8" height="6" fill="none" stroke="#333" stroke-width="1.0"/><path d="M1.6 5.9 L3.6 3.7 L4.6 4.4 L5.9 2.9 L7.5 5.9 Z" fill="#111"/><circle cx="2.4" cy="2.3" r="0.55" fill="#333"/></svg>
<div class="t" style="right:667.20px;top:363.05px;font-size:9.8px;color:#1f2226;font-weight:normal;-webkit-text-stroke:0.2px #1f2226">1</div>
<div class="t" style="left:370.80px;top:363.05px;font-size:9.8px;color:#1f2226;font-weight:normal;-webkit-text-stroke:0.2px #1f2226">Elektrische locomotief serie 143</div>
<div class="t" style="right:384.20px;top:363.09px;font-size:9.7px;color:#1f2226;font-weight:normal;-webkit-text-stroke:0.2px #1f2226;letter-spacing:-0.3px">37425</div>
<div class="t" style="left:654.20px;top:363.05px;font-size:9.8px;color:#1f2226;font-weight:normal;-webkit-text-stroke:0.2px #1f2226">Elektrische locomotieven</div>
<div class="t" style="left:777.30px;top:363.05px;font-size:9.8px;color:#1f2226;font-weight:normal;-webkit-text-stroke:0.2px #1f2226">VI</div>
<div class="t" style="left:841.60px;top:363.05px;font-size:9.8px;color:#1f2226;font-weight:normal;-webkit-text-stroke:0.2px #1f2226">Märklin</div>
<div class="t" style="left:911.60px;top:363.05px;font-size:9.8px;color:#1f2226;font-weight:normal;-webkit-text-stroke:0.2px #1f2226">H0 (1:87)</div>
<svg class="a" style="left:180.30px;top:406.95px;" width="10" height="10" viewBox="0 0 10 10"><g transform="translate(5,5) rotate(-45)"><path d="M-6.2 0 L-4.3 -1.45 V1.45 Z" fill="#111"/><rect x="-3.7" y="-1.45" width="6.6" height="2.9" fill="#111"/><rect x="3.5" y="-1.45" width="2.2" height="2.9" rx="0.5" fill="#111"/></g></svg>
<svg class="a" style="left:214.90px;top:406.55px;" width="9" height="7" viewBox="0 0 9 7"><rect x="0.5" y="0.5" width="8" height="6" fill="none" stroke="#333" stroke-width="1.0"/><path d="M1.6 5.9 L3.6 3.7 L4.6 4.4 L5.9 2.9 L7.5 5.9 Z" fill="#111"/><circle cx="2.4" cy="2.3" r="0.55" fill="#333"/></svg>
<div class="t" style="right:667.20px;top:400.55px;font-size:9.8px;color:#1f2226;font-weight:normal;-webkit-text-stroke:0.2px #1f2226">1</div>
<div class="t" style="left:370.80px;top:400.55px;font-size:9.8px;color:#1f2226;font-weight:normal;-webkit-text-stroke:0.2px #1f2226">Stoomlocomotief serie 038</div>
<div class="t" style="right:384.20px;top:400.59px;font-size:9.7px;color:#1f2226;font-weight:normal;-webkit-text-stroke:0.2px #1f2226;letter-spacing:-0.3px">55385</div>
<div class="t" style="left:654.20px;top:400.55px;font-size:9.8px;color:#1f2226;font-weight:normal;-webkit-text-stroke:0.2px #1f2226">Stoomlocomotieven</div>
<div class="t" style="left:777.30px;top:400.55px;font-size:9.8px;color:#1f2226;font-weight:normal;-webkit-text-stroke:0.2px #1f2226">IV</div>
<div class="t" style="left:841.60px;top:400.55px;font-size:9.8px;color:#1f2226;font-weight:normal;-webkit-text-stroke:0.2px #1f2226">Märklin</div>
<div class="t" style="left:911.60px;top:400.55px;font-size:9.8px;color:#1f2226;font-weight:normal;-webkit-text-stroke:0.2px #1f2226">Algeria</div>
<svg class="a" style="left:180.30px;top:444.45px;" width="10" height="10" viewBox="0 0 10 10"><g transform="translate(5,5) rotate(-45)"><path d="M-6.2 0 L-4.3 -1.45 V1.45 Z" fill="#111"/><rect x="-3.7" y="-1.45" width="6.6" height="2.9" fill="#111"/><rect x="3.5" y="-1.45" width="2.2" height="2.9" rx="0.5" fill="#111"/></g></svg>
<svg class="a" style="left:214.90px;top:444.05px;" width="9" height="7" viewBox="0 0 9 7"><rect x="0.5" y="0.5" width="8" height="6" fill="none" stroke="#333" stroke-width="1.0"/><path d="M1.6 5.9 L3.6 3.7 L4.6 4.4 L5.9 2.9 L7.5 5.9 Z" fill="#111"/><circle cx="2.4" cy="2.3" r="0.55" fill="#333"/></svg>
<div class="t" style="right:667.20px;top:438.05px;font-size:9.8px;color:#1f2226;font-weight:normal;-webkit-text-stroke:0.2px #1f2226">1</div>
<div class="t" style="left:370.80px;top:438.05px;font-size:9.8px;color:#1f2226;font-weight:normal;-webkit-text-stroke:0.2px #1f2226">Elektrische locomotief serie 151</div>
<div class="t" style="right:384.20px;top:438.09px;font-size:9.7px;color:#1f2226;font-weight:normal;-webkit-text-stroke:0.2px #1f2226;letter-spacing:-0.3px">55257</div>
<div class="t" style="left:654.20px;top:438.05px;font-size:9.8px;color:#1f2226;font-weight:normal;-webkit-text-stroke:0.2px #1f2226">Elektrische locomotieven</div>
<div class="t" style="left:777.30px;top:438.05px;font-size:9.8px;color:#1f2226;font-weight:normal;-webkit-text-stroke:0.2px #1f2226">VI</div>
<div class="t" style="left:841.60px;top:438.05px;font-size:9.8px;color:#1f2226;font-weight:normal;-webkit-text-stroke:0.2px #1f2226">Märklin</div>
<div class="t" style="left:911.60px;top:438.05px;font-size:9.8px;color:#1f2226;font-weight:normal;-webkit-text-stroke:0.2px #1f2226">Algeria</div>
<svg class="a" style="left:180.30px;top:481.95px;" width="10" height="10" viewBox="0 0 10 10"><g transform="translate(5,5) rotate(-45)"><path d="M-6.2 0 L-4.3 -1.45 V1.45 Z" fill="#111"/><rect x="-3.7" y="-1.45" width="6.6" height="2.9" fill="#111"/><rect x="3.5" y="-1.45" width="2.2" height="2.9" rx="0.5" fill="#111"/></g></svg>
<svg class="a" style="left:214.90px;top:481.55px;" width="9" height="7" viewBox="0 0 9 7"><rect x="0.5" y="0.5" width="8" height="6" fill="none" stroke="#333" stroke-width="1.0"/><path d="M1.6 5.9 L3.6 3.7 L4.6 4.4 L5.9 2.9 L7.5 5.9 Z" fill="#111"/><circle cx="2.4" cy="2.3" r="0.55" fill="#333"/></svg>
<div class="t" style="right:667.20px;top:475.55px;font-size:9.8px;color:#1f2226;font-weight:normal;-webkit-text-stroke:0.2px #1f2226">1</div>
<div class="t" style="left:370.80px;top:475.55px;font-size:9.8px;color:#1f2226;font-weight:normal;-webkit-text-stroke:0.2px #1f2226">Diesellocomotief serie 218</div>
<div class="t" style="right:384.20px;top:475.59px;font-size:9.7px;color:#1f2226;font-weight:normal;-webkit-text-stroke:0.2px #1f2226;letter-spacing:-0.3px">88807</div>
<div class="t" style="left:654.20px;top:475.55px;font-size:9.8px;color:#1f2226;font-weight:normal;-webkit-text-stroke:0.2px #1f2226">Diesellocomotieven</div>
<div class="t" style="left:777.30px;top:475.55px;font-size:9.8px;color:#1f2226;font-weight:normal;-webkit-text-stroke:0.2px #1f2226">VI</div>
<div class="t" style="left:841.60px;top:475.55px;font-size:9.8px;color:#1f2226;font-weight:normal;-webkit-text-stroke:0.2px #1f2226">Märklin</div>
<div class="t" style="left:911.60px;top:475.55px;font-size:9.8px;color:#1f2226;font-weight:normal;-webkit-text-stroke:0.2px #1f2226">Z (1:220)</div>
<svg class="a" style="left:180.30px;top:519.45px;" width="10" height="10" viewBox="0 0 10 10"><g transform="translate(5,5) rotate(-45)"><path d="M-6.2 0 L-4.3 -1.45 V1.45 Z" fill="#111"/><rect x="-3.7" y="-1.45" width="6.6" height="2.9" fill="#111"/><rect x="3.5" y="-1.45" width="2.2" height="2.9" rx="0.5" fill="#111"/></g></svg>
<svg class="a" style="left:214.90px;top:519.05px;" width="9" height="7" viewBox="0 0 9 7"><rect x="0.5" y="0.5" width="8" height="6" fill="none" stroke="#333" stroke-width="1.0"/><path d="M1.6 5.9 L3.6 3.7 L4.6 4.4 L5.9 2.9 L7.5 5.9 Z" fill="#111"/><circle cx="2.4" cy="2.3" r="0.55" fill="#333"/></svg>
<div class="t" style="right:667.20px;top:513.05px;font-size:9.8px;color:#1f2226;font-weight:normal;-webkit-text-stroke:0.2px #1f2226">1</div>
<div class="t" style="left:370.80px;top:513.05px;font-size:9.8px;color:#1f2226;font-weight:normal;-webkit-text-stroke:0.2px #1f2226">Goederentreinstoomlocomotief serie 85</div>
<div class="t" style="right:384.20px;top:513.09px;font-size:9.7px;color:#1f2226;font-weight:normal;-webkit-text-stroke:0.2px #1f2226;letter-spacing:-0.3px">37099</div>
<div class="t" style="left:654.20px;top:513.05px;font-size:9.8px;color:#1f2226;font-weight:normal;-webkit-text-stroke:0.2px #1f2226">Stoomlocomotieven</div>
<div class="t" style="left:777.30px;top:513.05px;font-size:9.8px;color:#1f2226;font-weight:normal;-webkit-text-stroke:0.2px #1f2226">III</div>
<div class="t" style="left:841.60px;top:513.05px;font-size:9.8px;color:#1f2226;font-weight:normal;-webkit-text-stroke:0.2px #1f2226">Märklin</div>
<div class="t" style="left:911.60px;top:513.05px;font-size:9.8px;color:#1f2226;font-weight:normal;-webkit-text-stroke:0.2px #1f2226">H0 (1:87)</div>
<svg class="a" style="left:180.30px;top:556.95px;" width="10" height="10" viewBox="0 0 10 10"><g transform="translate(5,5) rotate(-45)"><path d="M-6.2 0 L-4.3 -1.45 V1.45 Z" fill="#111"/><rect x="-3.7" y="-1.45" width="6.6" height="2.9" fill="#111"/><rect x="3.5" y="-1.45" width="2.2" height="2.9" rx="0.5" fill="#111"/></g></svg>
<svg class="a" style="left:214.90px;top:556.55px;" width="9" height="7" viewBox="0 0 9 7"><rect x="0.5" y="0.5" width="8" height="6" fill="none" stroke="#333" stroke-width="1.0"/><path d="M1.6 5.9 L3.6 3.7 L4.6 4.4 L5.9 2.9 L7.5 5.9 Z" fill="#111"/><circle cx="2.4" cy="2.3" r="0.55" fill="#333"/></svg>
<div class="t" style="right:667.20px;top:550.55px;font-size:9.8px;color:#1f2226;font-weight:normal;-webkit-text-stroke:0.2px #1f2226">1</div>
<div class="t" style="left:370.80px;top:550.55px;font-size:9.8px;color:#1f2226;font-weight:normal;-webkit-text-stroke:0.2px #1f2226">Elektrische locomotief serie E 44</div>
<div class="t" style="right:384.20px;top:550.59px;font-size:9.7px;color:#1f2226;font-weight:normal;-webkit-text-stroke:0.2px #1f2226;letter-spacing:-0.3px">55292</div>
<div class="t" style="left:654.20px;top:550.55px;font-size:9.8px;color:#1f2226;font-weight:normal;-webkit-text-stroke:0.2px #1f2226">Elektrische locomotieven</div>
<div class="t" style="left:777.30px;top:550.55px;font-size:9.8px;color:#1f2226;font-weight:normal;-webkit-text-stroke:0.2px #1f2226">II</div>
<div class="t" style="left:841.60px;top:550.55px;font-size:9.8px;color:#1f2226;font-weight:normal;-webkit-text-stroke:0.2px #1f2226">Märklin</div>
<div class="t" style="left:911.60px;top:550.55px;font-size:9.8px;color:#1f2226;font-weight:normal;-webkit-text-stroke:0.2px #1f2226">Algeria</div>
<svg class="a" style="left:245px;top:131.90px" width="43" height="31" viewBox="0 0 43 31"><rect x="0" y="0" width="43" height="30.2" fill="#dddddd"/><rect x="0" y="18.2" width="43" height="0.8" fill="#6c6c6c"/><path d="M8.2 17.9 V13 L9.6 11 H30.4 L32 12.6 V17.9 Z" fill="#c62a3c"/><rect x="8.6" y="16.2" width="23" height="1.7" fill="#4a2630"/><rect x="19" y="12.6" width="3" height="1.6" fill="#e8c8cc"/></svg>
<svg class="a" style="left:245px;top:169.40px" width="43" height="31" viewBox="0 0 43 31"><path d="M8 22.5 C12 20 26 17 35 17 L37 22 C28 24 16 27 9 28.5 Z" fill="#eeeeee"/><path d="M0 22.2 L42.9 12.2 L43 15.6 L0.3 26.4 Z" fill="#2a2a2a"/><path d="M0.5 24 L42.8 13.8" stroke="#777" stroke-width="0.5"/><path d="M7.3 19.8 L7.3 16.5 L10 14.8 L11 8.8 L12 8 L12.3 5.6 L14 5.6 L14.2 7.5 L17 7 L17.3 5.8 L19.5 5.6 L20 6.8 L22 6.5 L22.5 5 L34 4.6 L35 5.5 L34.8 12.8 L20 17.5 Z" fill="#161616"/><path d="M7.3 16.8 L13.5 16 L17.5 17.6 L16.5 19 L7.5 20 Z" fill="#c4202c"/><path d="M18 15.6 L34 11.2 L34.4 13.4 L19 17.8 Z" fill="#b31e2a"/></svg>
<svg class="a" style="left:245px;top:206.90px" width="43" height="31" viewBox="0 0 43 31"><rect x="3.2" y="15.2" width="35.8" height="0.7" fill="#bdbdbd"/><path d="M7.9 13.4 V11 L10.5 9 H32 L34.6 11 V13.4 Z" fill="#dd2a25"/><rect x="7.2" y="13.2" width="27.8" height="1.9" fill="#2b2b2b"/><path d="M11.5 9 L13.5 6.4 L15 6.6" stroke="#999" stroke-width="0.5" fill="none"/></svg>
<svg class="a" style="left:245px;top:244.40px" width="43" height="31" viewBox="0 0 43 31"><rect x="0" y="18.8" width="43" height="1.6" fill="#d0d0d0"/><path d="M2.9 18.5 V12.8 L4.5 11.5 H38 L39.3 13 V18.5 Z" fill="#1f3532"/><rect x="11" y="10" width="23" height="1.5" fill="#c85a5a" opacity="0.8"/><path d="M12.5 10 L14.5 7 L12 6.2" stroke="#aaa" stroke-width="0.5" fill="none"/></svg>
<svg class="a" style="left:245px;top:281.90px" width="43" height="31" viewBox="0 0 43 31"><rect x="0" y="0" width="43" height="30.2" fill="#dddddd"/><rect x="0" y="18" width="43" height="0.8" fill="#6c6c6c"/><path d="M10 17.9 V13.4 L11.3 12.1 H31 L32.3 13.4 V17.9 Z" fill="#8a2a4a"/><rect x="10.3" y="16.3" width="21.8" height="1.6" fill="#2e2a40"/></svg>
<svg class="a" style="left:245px;top:319.40px" width="43" height="31" viewBox="0 0 43 31"><rect x="0" y="0" width="43" height="30.2" fill="#dddddd"/><rect x="0" y="18.9" width="43" height="0.8" fill="#6c6c6c"/><path d="M1 18.8 V14 L3.5 11.5 H13 L14.5 9.6 H19 L20.5 10.6 V8.6 H22 V10.6 H34 V9 H35.4 V10.6 L41.5 12.8 L42.5 17 V18.8 Z" fill="#222222"/></svg>
<svg class="a" style="left:245px;top:356.90px" width="43" height="31" viewBox="0 0 43 31"><rect x="0" y="19.1" width="43" height="0.9" fill="#c8c8c8"/><path d="M2.1 16 V9.6 L3 9 H39 L39.8 9.6 V16 Z" fill="#dc2b2b"/><rect x="4" y="7.8" width="33" height="1.3" fill="#9a9a9a" opacity="0.7"/><path d="M1.6 15.6 H40.3 L41 17.9 H1.2 Z" fill="#3a3d3f"/><path d="M9 7.8 L12 4 L14 3.6" stroke="#888" stroke-width="0.5" fill="none"/><rect x="4" y="10.5" width="1.6" height="1.6" fill="#7a2020"/><rect x="36" y="10.5" width="1.6" height="1.6" fill="#7a2020"/></svg>
<svg class="a" style="left:245px;top:394.40px" width="43" height="31" viewBox="0 0 43 31"><rect x="0" y="19.6" width="43" height="0.9" fill="#cccccc"/><path d="M2.9 17 V13.5 L4 13 H10.1 V11.5 H23 V12.6 H36 V11.1 H37 V12.6 L39.3 13.3 V17 Z" fill="#1c1c1c"/><path d="M2.9 16.6 H40.2 L40.8 19.3 H3.6 Z" fill="#cf1f2c"/><circle cx="7" cy="18" r="1.2" fill="#a01822"/><circle cx="12" cy="18" r="1.2" fill="#a01822"/><circle cx="26" cy="17.8" r="1.5" fill="#a01822"/><circle cx="31" cy="17.8" r="1.5" fill="#a01822"/></svg>
<svg class="a" style="left:245px;top:431.90px" width="43" height="31" viewBox="0 0 43 31"><rect x="0" y="19.3" width="43" height="0.9" fill="#c8c8c8"/><path d="M3.2 16.8 V11.2 L4.2 10.4 H39 L39.8 11.2 V16.8 Z" fill="#e6e9ee"/><path d="M11 13 L20 12 L28 13.5 L37 12.6 V16.8 H11 Z" fill="#7d97c8"/><rect x="14" y="14.4" width="20" height="1.2" fill="#4a68a8"/><rect x="6" y="11" width="5" height="6" fill="#3a4444"/><path d="M2 16.8 H41 L40 18.4 H3 Z" fill="#2a2a2a"/><path d="M10 10.4 L7 7" stroke="#999" stroke-width="0.5"/></svg>
<svg class="a" style="left:245px;top:469.40px" width="43" height="31" viewBox="0 0 43 31"><rect x="0" y="19.7" width="43" height="1.3" fill="#d8d2cc"/><path d="M2.9 18.8 V12 L5 9.4 H23 V18.8 Z" fill="#d9dbde"/><path d="M3.4 13.5 L5 11.8 H23 V13.5 Z" fill="#3a3a3a"/><rect x="4" y="13.5" width="19" height="1.5" fill="#d84a4a"/><rect x="3.2" y="15.5" width="19.8" height="3.3" fill="#4a5258"/><path d="M23 18.8 V8.8 H37 L39.3 11.5 V15.6 H23 Z" fill="#1d1d1d"/><path d="M22 15.6 H39.3 L39.8 18.8 H21 Z" fill="#d82530"/></svg>
<svg class="a" style="left:245px;top:506.90px" width="43" height="31" viewBox="0 0 43 31"><rect x="0" y="21.1" width="43" height="0.9" fill="#c8c8c8"/><path d="M4.3 16.8 V11.2 L5 10.9 H35 V10.1 H36.6 V10.9 L38 11.5 V13 H37 V16.8 Z" fill="#1f2326"/><path d="M3.6 16.8 H38.5 L38.8 20.7 H4.2 Z" fill="#c9202e"/></svg>
<svg class="a" style="left:245px;top:544.40px" width="43" height="31" viewBox="0 0 43 31"><rect x="0" y="17.9" width="43" height="0.9" fill="#c8c8c8"/><path d="M5.1 17.2 V12.4 L9 11.6 V9.6 H33.7 V11.6 L37.9 12.4 V17.2 Z" fill="#2a4640"/><rect x="5.5" y="16.1" width="32" height="1.5" fill="#151a18"/><path d="M11 9.6 L13.5 5.2 L16 9.6 M27 9.6 L29.5 5.2 L32 9.6" stroke="#999" stroke-width="0.5" fill="none"/></svg>
</div></body></html>
